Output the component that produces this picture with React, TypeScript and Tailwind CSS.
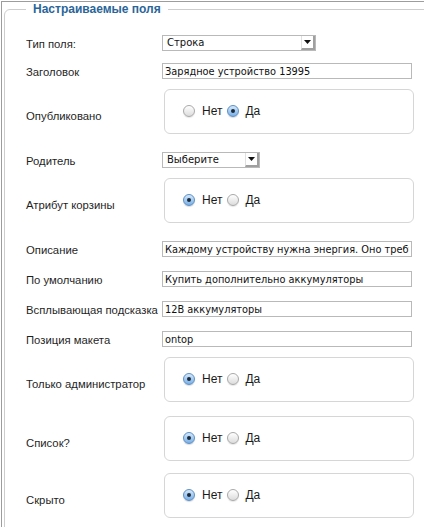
import type { ReactNode } from "react";

const LABEL = "w-[136px] shrink-0 whitespace-nowrap text-[11.3px] leading-[14px] text-[#1f1f1f]";

function Radio({ checked }: { checked: boolean }) {
  return checked ? (
    <span className="flex size-[12px] shrink-0 items-center justify-center rounded-full border border-[#5d8fc4] bg-gradient-to-b from-[#d4e8fb] to-[#79b0e6] shadow-[0_1px_1px_rgba(0,0,0,0.15)]">
      <span className="size-[4px] rounded-full bg-[#1c2a3a]" />
    </span>
  ) : (
    <span className="block size-[12px] shrink-0 rounded-full border border-[#a9a9a9] bg-gradient-to-b from-[#ffffff] to-[#dcdcdc] shadow-[0_1px_1px_rgba(0,0,0,0.1)]" />
  );
}

function YesNo({ yes }: { yes: boolean }) {
  return (
    <div className="ml-[2px] flex h-[45px] w-[250px] items-start rounded-[6px] border border-[#d6d6d6] pt-[14px]">
      <div className="flex h-[14px] items-center pl-[18px] text-[12px] text-[#1a1a1a]">
        <Radio checked={!yes} />
        <span className="ml-[7px]">Нет</span>
        <span className="ml-[5px] flex">
          <Radio checked={yes} />
        </span>
        <span className="ml-[6px]">Да</span>
      </div>
    </div>
  );
}

function Select({ value, width }: { value: string; width: string }) {
  return (
    <div className={`flex h-[16px] items-stretch border border-[#b9b9b9] bg-white ${width}`}>
      <span className="flex-1 pl-[4px] font-['DejaVu_Sans'] text-[10px] leading-[14px] text-[#111]">
        {value}
      </span>
      <span className="flex w-[14px] items-center justify-center border-r-2 border-b-2 border-l border-[#a0a0a0] border-l-[#e0e0e0] bg-white">
        <svg width="7" height="4" viewBox="0 0 7 4">
          <path d="M0 0h7L3.5 4z" fill="#111" />
        </svg>
      </span>
    </div>
  );
}

function Input({ value }: { value: string }) {
  return (
    <input
      readOnly
      defaultValue={value}
      className="h-[16px] w-[250px] border border-[#b9b9b9] bg-white px-[2px] font-['DejaVu_Sans'] text-[9.8px] leading-[14px] text-[#111] outline-none"
    />
  );
}

function Row({ label, children, className = "" }: { label: string; children: ReactNode; className?: string }) {
  return (
    <div className={`flex items-center ${className}`}>
      <span className={`${LABEL} pt-px`}>{label}</span>
      {children}
    </div>
  );
}

function BoxRow({ label, yes, className = "" }: { label: string; yes: boolean; className?: string }) {
  return (
    <div className={`flex h-[53px] items-start ${className}`}>
      <span className={`${LABEL} self-center`}>{label}</span>
      <YesNo yes={yes} />
    </div>
  );
}

export default function App() {
  return (
    <div className="h-[527px] w-[424px] overflow-hidden bg-white font-['Liberation_Sans',Arial,sans-serif]">
      <div className="ml-px mt-px h-[560px] w-[460px] border-l border-t border-[#9d9d9d] pl-[2px]">
        <fieldset className="h-[600px] w-[440px] rounded-tl-[6px] border border-[#cdcdcd] pl-[21px] pt-[19px]">
          <legend className="px-[7px] text-[12px] font-bold leading-[14px] text-[#2a6599]">
            Настраиваемые поля
          </legend>
          <Row label="Тип поля:">
            <Select value="Строка" width="w-[154px]" />
          </Row>
          <Row label="Заголовок" className="mt-[12px]">
            <Input value="Зарядное устройство 13995" />
          </Row>
          <BoxRow label="Опубликовано" yes className="mt-[10px]" />
          <Row label="Родитель" className="mt-[10px]">
            <Select value="Выберите" width="w-[98px]" />
          </Row>
          <BoxRow label="Атрибут корзины" yes={false} className="mt-[10px]" />
          <Row label="Описание" className="mt-[10px]">
            <Input value="Каждому устройству нужна энергия. Оно требует зарядки." />
          </Row>
          <Row label="По умолчанию" className="mt-[14px]">
            <Input value="Купить дополнительно аккумуляторы" />
          </Row>
          <Row label="Всплывающая подсказка" className="mt-[14px]">
            <Input value="12В аккумуляторы" />
          </Row>
          <Row label="Позиция макета" className="mt-[14px]">
            <Input value="ontop" />
          </Row>
          <BoxRow label="Только администратор" yes={false} className="mt-[10px]" />
          <BoxRow label="Список?" yes={false} className="mt-[6px]" />
          <BoxRow label="Скрыто" yes={false} className="mt-[4px]" />
        </fieldset>
      </div>
    </div>
  );
}
